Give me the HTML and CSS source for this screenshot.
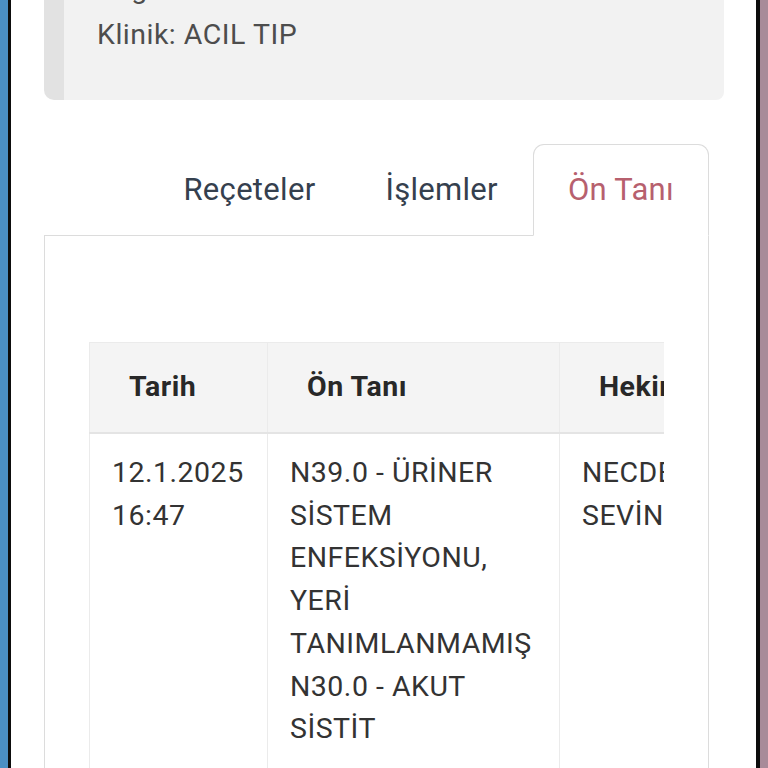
FILE: index.html
```html
<!DOCTYPE html>
<html lang="tr">
<head>
<meta charset="utf-8">
<title>Ön Tanı</title>
<link rel="stylesheet" href="styles.css">
</head>
<body>
<div class="frame">
  <div class="edge-left"></div>
  <main class="screen">
    <div class="info-card">
      <p class="info-line info-line-first">Bağlı Birim: ACİL SERVİS</p>
      <p class="info-line">Klinik: ACIL TIP</p>
    </div>
    <div class="tabs">
      <nav class="tab-nav">
        <a class="tab">Reçeteler</a>
        <a class="tab">İşlemler</a>
        <a class="tab tab-active">Ön Tanı</a>
      </nav>
      <div class="tab-pane">
        <div class="table-wrap">
          <table class="dx-table">
            <thead>
              <tr>
                <th class="col-date">Tarih</th>
                <th class="col-dx">Ön Tanı</th>
                <th class="col-doc">Hekim</th>
              </tr>
            </thead>
            <tbody>
              <tr>
                <td>12.1.2025<br>16:47</td>
                <td>N39.0 - ÜRİNER SİSTEM ENFEKSİYONU, YERİ TANIMLANMAMIŞ<br>N30.0 - AKUT SİSTİT</td>
                <td>NECDET SEVİNÇ</td>
              </tr>
            </tbody>
          </table>
        </div>
      </div>
    </div>
  </main>
  <div class="edge-right"></div>
</div>
</body>
</html>
```
FILE: styles.css
```css
* { box-sizing: border-box; }
html, body { margin: 0; padding: 0; background: #ffffff; }
body {
  font-family: Roboto, "Liberation Sans", sans-serif;
  font-size: 28.5px;
  line-height: 1.5;
  letter-spacing: 0.5px;
  color: #333333;
}
.frame {
  display: flex;
  width: 768px;
  height: 768px;
  overflow: hidden;
}
.edge-left {
  flex: 0 0 11px;
  background: #4b8fc4;
  border-right: 3px solid #0d0d0d;
}
.edge-right {
  flex: 0 0 12px;
  background: #a88b99;
  border-left: 4px solid #0d0d0d;
}
.screen {
  flex: 1 1 auto;
  background: #ffffff;
  overflow: hidden;
}
.info-card {
  margin: -32px 32px 0 33px;
  padding: 0 20px 43px 33px;
  background: #f2f2f2;
  border-left: 20px solid #e2e2e2;
  border-radius: 0 0 8px 10px;
}
.info-line {
  margin: 0;
  color: #4d4d4d;
}
.info-line-first {
  margin-bottom: 3px;
}
.tabs {
  margin: 44px 47px 0 33px;
}
.tab-nav {
  display: flex;
  justify-content: flex-end;
  border-bottom: 1px solid #dcdcdc;
}
.tab {
  display: block;
  font-size: 31px;
  letter-spacing: 0.3px;
  padding: 22px 34px 22px;
  border: 1px solid transparent;
  border-radius: 11px 11px 0 0;
  margin-bottom: -1px;
  color: #35404e;
}
.tab-active {
  color: #b7606e;
  border-color: #dcdcdc #dcdcdc #ffffff;
  background: #ffffff;
}
.tab-pane {
  border: 1px solid #dcdcdc;
  border-top: none;
  padding: 106px 44px 40px;
}
.table-wrap {
  overflow: hidden;
}
.dx-table {
  border-collapse: collapse;
  table-layout: fixed;
  width: 670px;
}
.col-date { width: 178px; }
.col-dx { width: 292px; }
.col-doc { width: 200px; }
.dx-table th {
  text-align: left;
  font-weight: 700;
  color: #282828;
  background: #f4f4f4;
  padding: 23px 18px 23px 39px;
  border: 1px solid #ebebeb;
  border-bottom: 2px solid #e4e4e4;
}
.dx-table td {
  vertical-align: top;
  padding: 18px 18px 18px 22px;
  border: 1px solid #ebebeb;
  border-top: none;
  color: #333333;
}
```
